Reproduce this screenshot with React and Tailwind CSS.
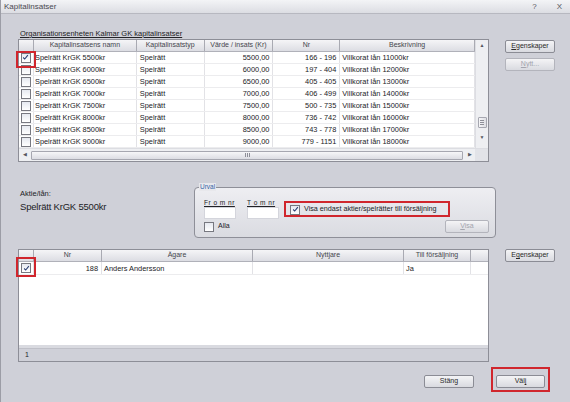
import React from 'react';

const Check = ({ checked }) => (
  <span className="inline-flex items-center justify-center w-[10px] h-[10px] border border-[#777880] bg-gradient-to-b from-[#e6e9f0] to-[#ffffff]">
    {checked && (
      <svg viewBox="0 0 9 9" className="w-[7px] h-[7px]">
        <path d="M1.5 4.5 L3.5 6.5 L7.5 1.5" fill="none" stroke="#2b3f73" strokeWidth="1.4" />
      </svg>
    )}
  </span>
);

const Btn = ({ children, disabled, className = '' }) => (
  <div
    className={`flex items-center justify-center h-[13px] rounded-[2px] border text-[7px] bg-gradient-to-b from-[#f4f4f6] to-[#d9dae0] ${
      disabled ? 'border-[#b3b4bc] text-[#a3a4ad]' : 'border-[#8b8c95] text-[#2a2a2a]'
    } ${className}`}
  >
    {children}
  </div>
);

const topCols = [
  { name: 'Kapitalinsatsens namn', w: 'w-[103px]', align: 'text-left pl-[1px]' },
  { name: 'Kapitalinsatstyp', w: 'w-[68px]', align: 'text-left pl-[3px]' },
  { name: 'Värde / insats (Kr)', w: 'w-[69px]', align: 'text-right pr-[3px]' },
  { name: 'Nr', w: 'w-[67px]', align: 'text-right pr-[3px]' },
  { name: 'Beskrivning', w: 'w-[135px]', align: 'text-left pl-[2px]' },
];

const rows = [
  ['Spelrätt KrGK 5500kr', 'Spelrätt', '5500,00', '166 - 196', 'Villkorat lån 11000kr'],
  ['Spelrätt KrGK 6000kr', 'Spelrätt', '6000,00', '197 - 404', 'Villkorat lån 12000kr'],
  ['Spelrätt KrGK 6500kr', 'Spelrätt', '6500,00', '405 - 405', 'Villkorat lån 13000kr'],
  ['Spelrätt KrGK 7000kr', 'Spelrätt', '7000,00', '406 - 499', 'Villkorat lån 14000kr'],
  ['Spelrätt KrGK 7500kr', 'Spelrätt', '7500,00', '500 - 735', 'Villkorat lån 15000kr'],
  ['Spelrätt KrGK 8000kr', 'Spelrätt', '8000,00', '736 - 742', 'Villkorat lån 16000kr'],
  ['Spelrätt KrGK 8500kr', 'Spelrätt', '8500,00', '743 - 778', 'Villkorat lån 17000kr'],
  ['Spelrätt KrGK 9000kr', 'Spelrätt', '9000,00', '779 - 1151', 'Villkorat lån 18000kr'],
];

const bottomCols = [
  { name: 'Nr', w: 'w-[68px]' },
  { name: 'Ägare', w: 'w-[151px]' },
  { name: 'Nyttjare', w: 'w-[151px]' },
  { name: 'Till försäljning', w: 'w-[67px]' },
];

const HeadCell = ({ className = '', children }) => (
  <div className={`h-full flex items-center justify-center border-r border-[#a9aab2] text-[7px] text-[#44454c] ${className}`}>
    {children}
  </div>
);

export default function App() {
  return (
    <div className="w-[570px] h-[402px] bg-[#cfd0d8] border-l border-[#9c9da6] flex flex-col font-['Liberation_Sans',Arial,sans-serif] text-[#222226] overflow-hidden">
      {/* title bar */}
      <div className="h-[14px] shrink-0 flex items-center justify-between bg-gradient-to-b from-[#f3f4f6] to-[#dcdde3] border-b border-[#b7b8c0] pl-[3px] pr-[8px]">
        <span className="text-[8px] text-[#4a4a52]">Kapitalinsatser</span>
        <div className="flex gap-[20px] text-[8px] text-[#55565e]">
          <span>?</span>
          <span>X</span>
        </div>
      </div>

      {/* top grid section */}
      <div className="flex mt-[14px]">
        <div className="ml-[17px] w-[471px]">
          <div className="h-[11px] text-[7.5px] underline leading-[11px] pl-[2px]">Organisationsenheten Kalmar GK kapitalinsatser</div>
          <div className="relative h-[123px] border border-[#8d8e97] bg-white flex flex-col">
            <div className="flex h-[108px]">
              <div className="w-[456px]">
                <div className="flex h-[12px] bg-gradient-to-b from-[#f5f5f7] to-[#dcdde3] border-b border-[#b0b1b9]">
                  <HeadCell className="w-[15px]" />
                  {topCols.map((c) => (
                    <HeadCell key={c.name} className={c.w}>{c.name}</HeadCell>
                  ))}
                </div>
                {rows.map((r, i) => (
                  <div key={r[0]} className="flex h-[12px] border-b border-[#ececee] text-[7.4px] leading-[12px]">
                    <div className="w-[15px] flex items-center justify-center border-r border-[#e2e2e6]">
                      <Check checked={i === 0} />
                    </div>
                    {topCols.map((c, j) => (
                      <div key={c.name} className={`${c.w} ${c.align} border-r border-[#e2e2e6] whitespace-nowrap overflow-hidden`}>
                        {r[j]}
                      </div>
                    ))}
                  </div>
                ))}
              </div>
              {/* vertical scrollbar */}
              <div className="w-[13px] bg-[#eeeff2] border-l border-[#dcdde2] flex flex-col items-center">
                <div className="h-[12px] flex items-center text-[5px] text-[#55565e]">▲</div>
                <div className="mt-[65px] w-[9px] h-[11px] border border-[#a6a7b0] rounded-[1px] bg-gradient-to-r from-[#f6f6f8] to-[#dedfe4] flex flex-col items-center justify-center gap-[1px]">
                  <div className="w-[4px] h-px bg-[#8e8f98]" />
                  <div className="w-[4px] h-px bg-[#8e8f98]" />
                  <div className="w-[4px] h-px bg-[#8e8f98]" />
                </div>
                <div className="mt-[6px] text-[5px] text-[#55565e]">▼</div>
              </div>
            </div>
            {/* horizontal scrollbar */}
            <div className="flex h-[13px] border-t border-[#dcdde2] bg-[#eeeff2]">
              <div className="w-[456px] flex items-center">
                <span className="w-[12px] text-center text-[5px] text-[#55565e]">◀</span>
                <div className="flex-1 h-[9px] mr-[2px] border border-[#a6a7b0] rounded-[1px] bg-gradient-to-b from-[#f6f6f8] to-[#dcdde3] flex items-center justify-center">
                  <div className="flex gap-[1px]">
                    <div className="w-px h-[4px] bg-[#8e8f98]" />
                    <div className="w-px h-[4px] bg-[#8e8f98]" />
                    <div className="w-px h-[4px] bg-[#8e8f98]" />
                  </div>
                </div>
                <span className="w-[10px] text-center text-[5px] text-[#55565e]">▶</span>
              </div>
              <div className="w-[13px] bg-[#e2e3e8]" />
            </div>
            <div className="absolute left-[-3px] top-[11px] w-[20px] h-[17px] border-2 border-[#d0262d]" />
          </div>
        </div>
        <div className="ml-[16px] pt-[12px] w-[50px] flex flex-col gap-[5px]">
          <Btn><span><span className="underline">E</span>genskaper</span></Btn>
          <Btn disabled><span><span className="underline">N</span>ytt...</span></Btn>
        </div>
      </div>

      {/* middle section */}
      <div className="flex mt-[25px]">
        <div className="ml-[19px] w-[174px] pt-[2px]">
          <div className="text-[7.5px] leading-[10px]">Aktie/lån:</div>
          <div className="text-[9.5px] leading-[12px] mt-[2px] tracking-[-0.2px]">Spelrätt KrGK 5500kr</div>
        </div>
        <div className="relative w-[302px] h-[51px] rounded-[4px] border border-[#8e8f98] bg-gradient-to-b from-[#eeeef2] to-[#dadbe1] pl-[9px] pt-[11px]">
          <span className="absolute left-[4px] top-[-5px] px-[1px] bg-[#e8e8ec] text-[6.5px] leading-[8px] text-[#3565a8]">Urval</span>
          <div className="flex items-start">
            <div className="w-[32px]">
              <div className="text-[6.5px] leading-[8px] underline tracking-[0.5px] whitespace-nowrap">Fr o m nr</div>
              <div className="h-[12px] bg-white border border-[#d4d5dc]" />
            </div>
            <div className="w-[32px] ml-[11px]">
              <div className="text-[6.5px] leading-[8px] underline tracking-[0.5px] whitespace-nowrap">T o m nr</div>
              <div className="h-[12px] bg-white border border-[#d4d5dc]" />
            </div>
            <div className="relative ml-[9px] mt-[5px] flex items-center gap-[4px] h-[11px] pl-[2px]">
              <Check checked />
              <span className="text-[7.2px] whitespace-nowrap">Visa endast aktier/spelrätter till försäljning</span>
              <div className="absolute left-[-4px] top-[-3px] w-[166px] h-[16px] border-2 border-[#d0262d]" />
            </div>
          </div>
          <div className="flex items-center justify-between mt-[1px] pr-[6px]">
            <div className="flex items-center gap-[4px]">
              <Check />
              <span className="text-[7px]">Alla</span>
            </div>
            <Btn disabled className="w-[44px]"><span><span className="underline">V</span>isa</span></Btn>
          </div>
        </div>
      </div>

      {/* bottom grid */}
      <div className="flex mt-[11px]">
        <div className="ml-[17px] relative w-[471px] h-[113px] border border-[#8d8e97] bg-white flex flex-col">
          <div className="flex h-[12px] bg-gradient-to-b from-[#f5f5f7] to-[#dcdde3] border-b border-[#b0b1b9]">
            <HeadCell className="w-[15px]" />
            {bottomCols.map((c) => (
              <HeadCell key={c.name} className={c.w}>{c.name}</HeadCell>
            ))}
          </div>
          <div className="flex h-[13px] text-[7.4px] leading-[13px] border-b border-[#ececee]">
            <div className="w-[15px] flex items-center justify-center border-r border-[#e2e2e6]">
              <Check checked />
            </div>
            <div className="w-[68px] text-right pr-[3px] border-r border-[#e2e2e6]">188</div>
            <div className="w-[151px] pl-[2px] border-r border-[#e2e2e6]">Anders Andersson</div>
            <div className="w-[151px] border-r border-[#e2e2e6]" />
            <div className="w-[67px] pl-[2px] border-r border-[#e2e2e6]">Ja</div>
          </div>
          <div className="flex-1" />
          <div className="h-[3px] bg-[#d9dae0]" />
          <div className="h-[13px] bg-[#cfd0d8] border-t border-[#bfc0c8] text-[7px] leading-[12px] pl-[6px]">1</div>
          <div className="absolute left-[-3px] top-[7px] w-[20px] h-[20px] border-2 border-[#d0262d]" />
        </div>
        <div className="ml-[16px] w-[50px]">
          <Btn><span>E<span className="underline">g</span>enskaper</span></Btn>
        </div>
      </div>

      {/* footer buttons */}
      <div className="flex justify-end items-center mt-[13px] pr-[25px] gap-[22px]">
        <Btn className="w-[50px]">Stäng</Btn>
        <div className="relative">
          <Btn className="w-[49px]"><span>Väl<span className="underline">j</span></span></Btn>
          <div className="absolute left-[-5px] top-[-8px] w-[59px] h-[25px] border-2 border-[#d0262d]" />
        </div>
      </div>
    </div>
  );
}
